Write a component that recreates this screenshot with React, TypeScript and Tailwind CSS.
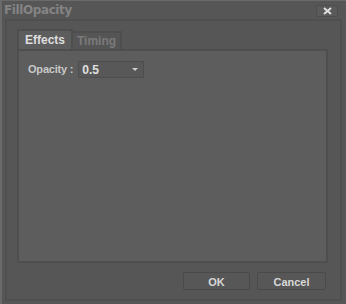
export default function App() {
  return (
    <div
      className="w-[346px] h-[304px] bg-[#565656] flex flex-col border-l-2 border-t border-[#6a6a6a] text-[11px]"
      style={{ fontFamily: '"Liberation Sans", Arial, sans-serif' }}
    >
      {/* Barre de titre */}
      <div className="h-[18px] flex items-center justify-between pl-[2px] pr-[8px]">
        <span
          className="font-bold text-[12px] text-[#848484] tracking-[-0.4px]"
          style={{ fontFamily: '"DejaVu Sans", sans-serif' }}
        >
          FillOpacity
        </span>
        <button className="w-[22px] h-[12px] mt-[2px] rounded-[2px] bg-[#5a5a5a] border border-[#4e4e4e] flex items-center justify-center">
          <svg width="9" height="8" viewBox="0 0 9 8">
            <path d="M1 1 L8 7 M8 1 L1 7" stroke="#e0e0e0" strokeWidth="2" />
          </svg>
        </button>
      </div>

      {/* Cadre principal */}
      <div className="ml-[3px] mr-[4px] mb-[3px] flex-1 border-2 border-[#4f4f4f] flex flex-col pl-[10px] pr-[12px] pt-[8px]">
        {/* Onglets */}
        <div className="flex items-end h-[20px]">
          <div className="h-[20px] w-[56px] bg-[#5d5d5d] border-2 border-b-0 border-[#4e4e4e] flex items-center justify-center font-bold text-[12px] text-[#dedede]">
            Effects
          </div>
          <div className="h-[18px] w-[49px] bg-[#555555] border-2 border-b-0 border-l-0 border-[#4e4e4e] flex items-center justify-center font-bold text-[12px] text-[#7a7a7a]">
            Timing
          </div>
        </div>

        {/* Panneau */}
        <div className="h-[214px] bg-[#5d5d5d] border-2 border-[#4e4e4e] pl-[9px] pt-[10px]">
          <div className="flex items-center gap-[5px]">
            <span className="font-bold text-[11px] tracking-[-0.2px] text-[#c8c8c8]">Opacity :</span>
            <div className="w-[66px] h-[17px] bg-[#585858] border border-[#4e4e4e] flex items-center justify-between pl-[3px] pr-[5px]">
              <span className="font-bold text-[12px] text-[#e0e0e0]">0.5</span>
              <svg width="6" height="4" viewBox="0 0 6 4">
                <path d="M0 0 L6 0 L3 3 Z" fill="#d0d0d0" />
              </svg>
            </div>
          </div>
        </div>

        {/* Boutons */}
        <div className="flex justify-end gap-[7px] mt-[9px] pr-[2px]">
          <button className="w-[67px] h-[18px] pt-[1px] bg-[#575757] border border-[#4a4a4a] rounded-[2px] font-bold text-[11px] text-[#d8d8d8]">
            OK
          </button>
          <button className="w-[69px] h-[18px] pt-[1px] bg-[#575757] border border-[#4a4a4a] rounded-[2px] font-bold text-[11px] text-[#d8d8d8]">
            Cancel
          </button>
        </div>
      </div>
    </div>
  );
}
